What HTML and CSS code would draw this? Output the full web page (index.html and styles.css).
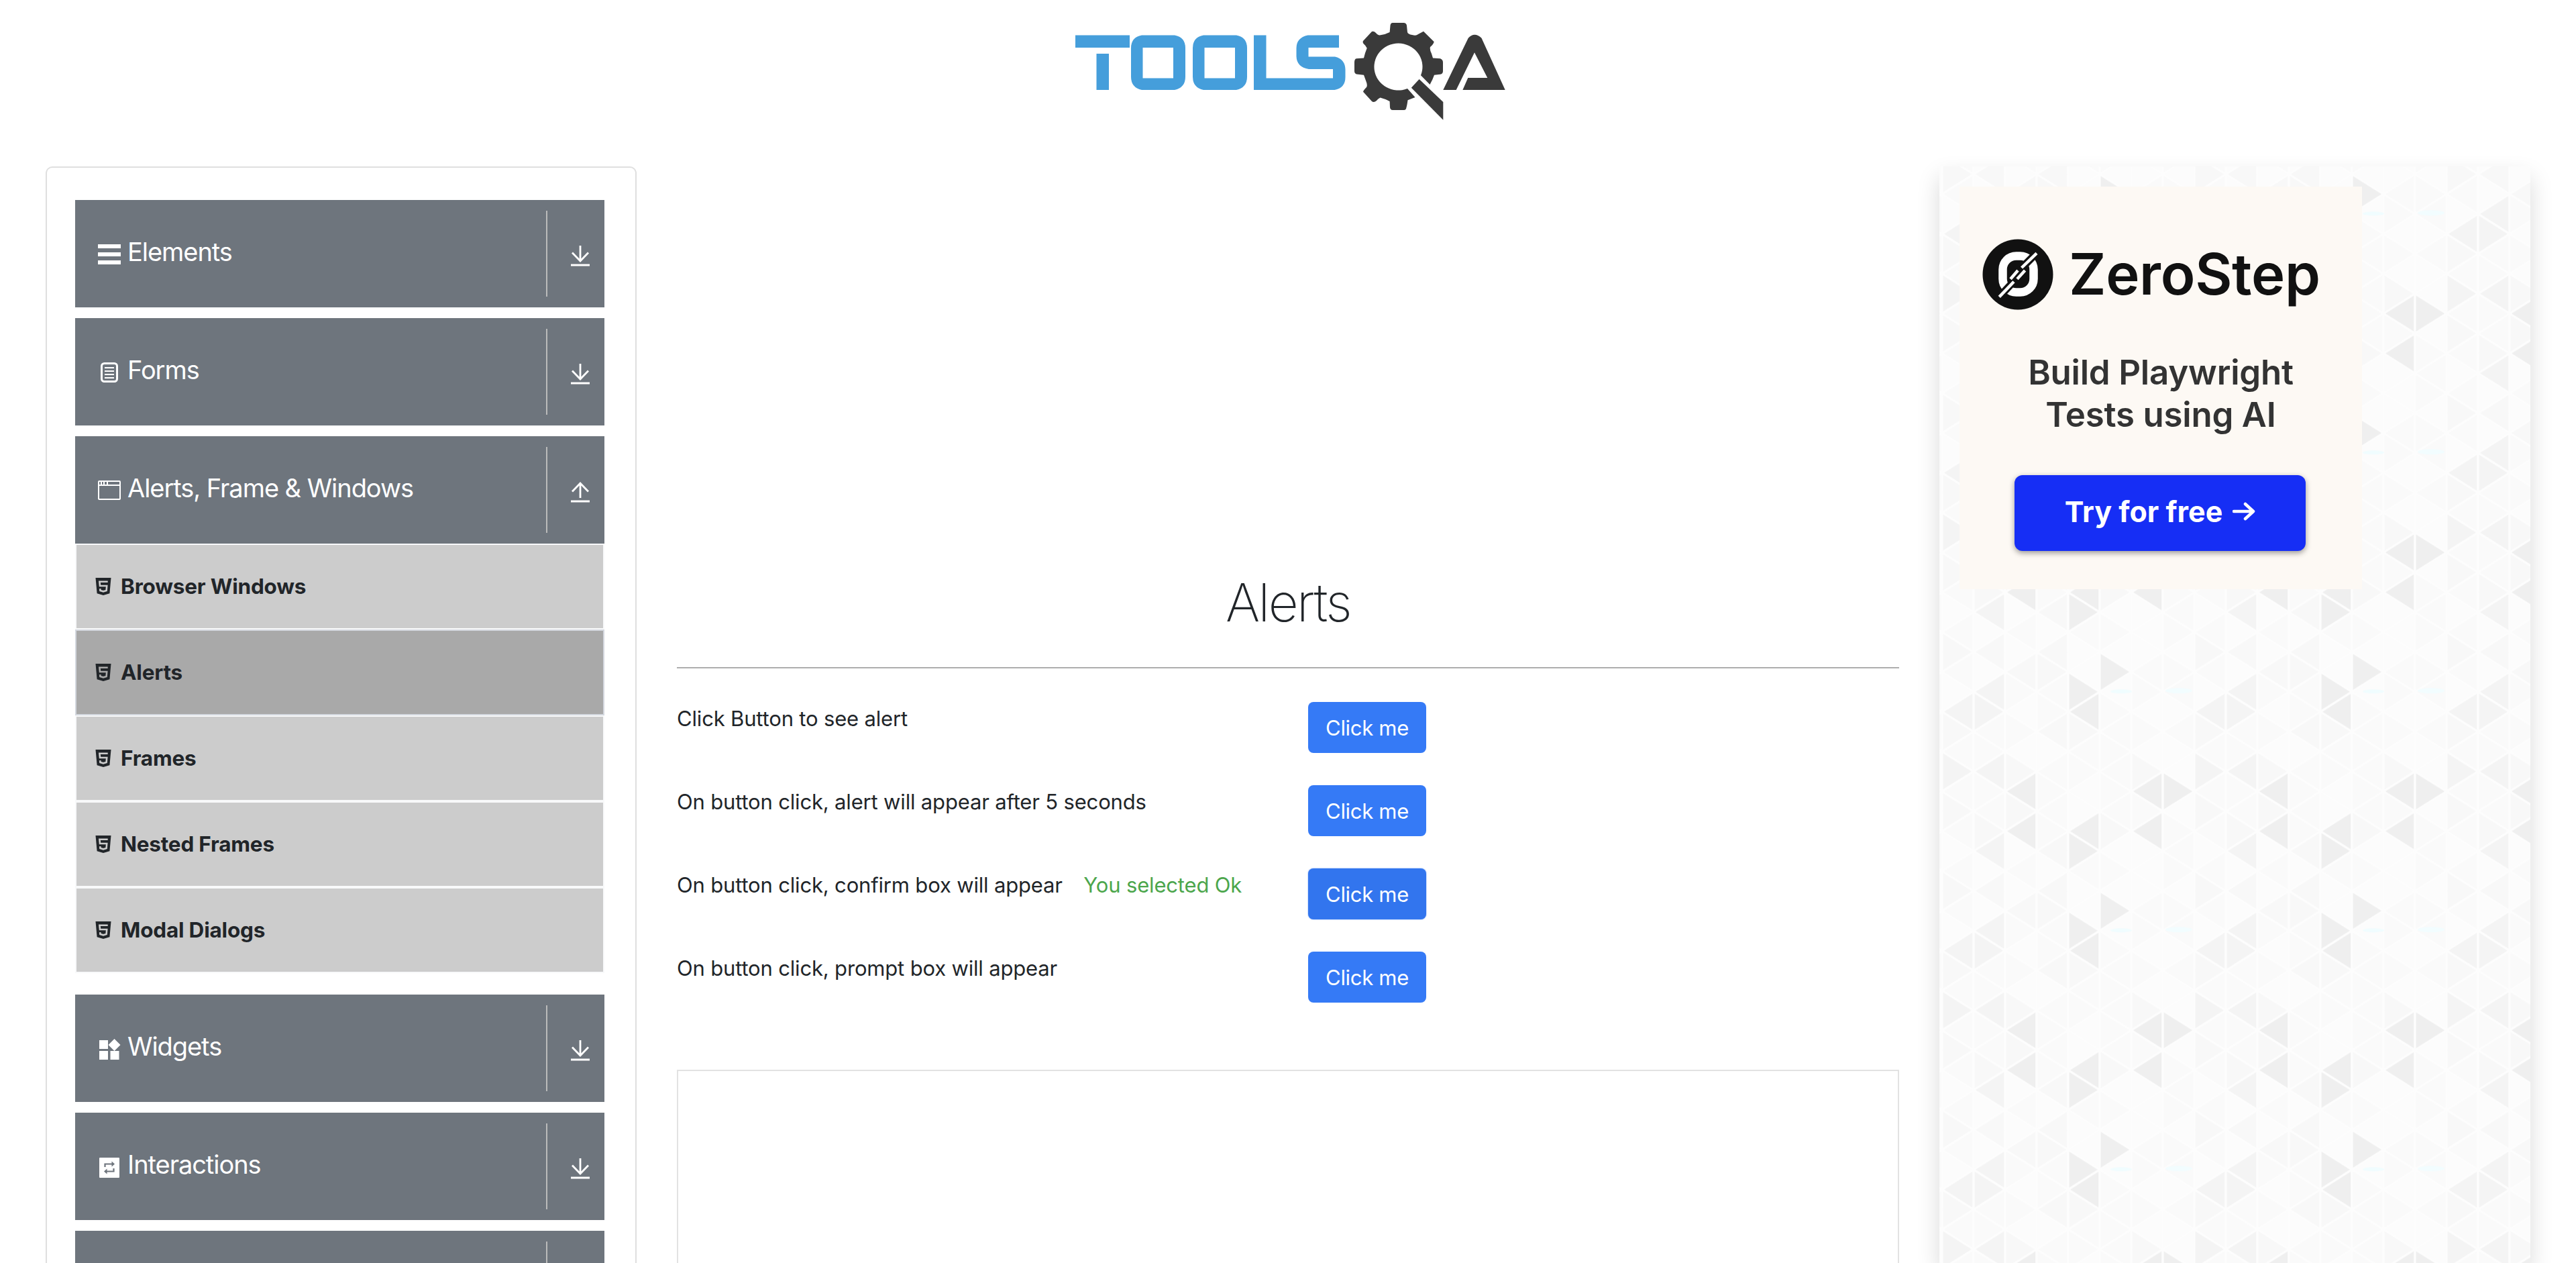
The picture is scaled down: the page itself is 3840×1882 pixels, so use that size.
FILE: index.html
```html
<!DOCTYPE html>
<html lang="en">
<head>
<meta charset="utf-8">
<title>DEMOQA</title>
<link rel="stylesheet" href="styles.css">
</head>
<body>
<svg class="sprite" aria-hidden="true">
  <symbol id="down" viewBox="0 0 30 32"><path d="M15 1v22M3 11.500l12 12.500 12-12.500" fill="none" stroke="#fff" stroke-width="2.800"/><path d="M1 28.500h28v3H1z" fill="#fff"/></symbol>
  <symbol id="up" viewBox="0 0 30 32"><path d="M15 25V3M3 15.500 15 3l12 12.500" fill="none" stroke="#fff" stroke-width="2.800"/><path d="M1 28.500h28v3H1z" fill="#fff"/></symbol>
  <symbol id="html5" viewBox="0 0 24 26"><path d="M.500 0h23l-2.100 23.300L12 26l-9.400-2.700z" fill="currentColor"/><path d="M18.700 5.800H6.400l.600 6.200h10.200l-.600 7-4.600 1.300-4.600-1.300-.200-2.800" fill="none" stroke="var(--cut)" stroke-width="2.600"/></symbol>
</svg>
<header class="top">
  <svg class="logo" viewBox="0 0 690 170" width="690" height="170" role="img" aria-label="ToolsQA">
    <g fill="#459edb" fill-rule="evenodd">
      <path d="M23 32.500h81V51H23zM54.500 60H73v54H54.500z"/>
      <path d="M122 32.500h49q16 3 16 19v43q0 16-16 19.500h-49q-16-3.500-16-19.500v-43q0-16 16-19zM123.500 51v45.500H169V51z"/>
      <path d="M214 32.500h49q16 3 16 19v43q0 16-16 19.500h-49q-16-3.500-16-19.500v-43q0-16 16-19zM215.500 51v45.500H261V51z"/>
      <path d="M289 32.500h18.500v64H407V83h-36q-18-3-18.500-19V52q0-16 17-19.500H416V51h-45.500v13.500H410q15 3.500 15.500 19V95q0 16-16 19H289z"/>
    </g>
    <g fill="#3a3a3a">
      <path d="M496 14H513Q516.500 14.500 517 18L518 28Q519 31 525 32Q531 34 534 31L542 26.700L557.700 42.300Q557 46 552 50Q551 54 554 60L556 66.500L567 67.300Q571 69 571 73V86Q571 90 567 90.700L558 91.700Q556 98 551.500 106L538 92.300A36 35 0 1 0 518 112L529.500 125L518.500 129.300Q517.500 137 516.500 140Q516 144 513 144H496Q492.500 144 492 140L491.600 131Q484 127 477.500 125.500Q474 127 472 130Q468 133.500 465 131L452 116.700Q452 115 457 110Q459 107 456 100L453 91.700L442 90.500Q439 89 439 86V73Q439 68 442 67.300L453 66.500Q455 58 457.700 51.700Q456 48 452.500 45Q451 43 452 41L465 27Q468 26 471 29Q474 33 478 32.300Q486 31 491.600 28L492.500 18Q493 14 496 14Z"/>
      <path d="M535.600 98L571.300 132V158.700L523.800 110.700Z"/>
      <path d="M571.300 114L608.700 36.700Q618 27 628.500 36.700L663.700 114H600.400L608.300 96H637.300L618 58.300L590.700 114Z"/>
    </g>
  </svg>
</header>
<div class="columns">
  <nav class="side">
    <div class="group"><svg class="ico" viewBox="0 0 36 36"><path d="M1 3h34v6H1zM1 15h34v6H1zM1 27h34v6H1z" fill="#fff"/></svg><span class="name">Elements</span><span class="toggle"><svg><use href="#down"/></svg></span></div>
    <div class="group"><svg class="ico" viewBox="0 0 36 36"><rect x="6.500" y="4.500" width="23" height="27" rx="4" fill="none" stroke="#fff" stroke-width="3"/><path d="M11 11h14M11 16h14M11 21h14M11 26h14" stroke="#fff" stroke-width="1.800"/></svg><span class="name">Forms</span><span class="toggle"><svg><use href="#down"/></svg></span></div>
    <div class="group"><svg class="ico" viewBox="0 0 36 36"><rect x="2" y="4" width="32" height="27" rx="1" fill="none" stroke="#fff" stroke-width="2"/><path d="M2 10h32M6 4v6M10 4v6M15 4v6" stroke="#fff" stroke-width="2"/></svg><span class="name">Alerts, Frame &amp; Windows</span><span class="toggle"><svg><use href="#up"/></svg></span></div>
    <ul class="menu">
      <li><svg><use href="#html5"/></svg>Browser Windows</li>
      <li class="active"><svg><use href="#html5"/></svg>Alerts</li>
      <li><svg><use href="#html5"/></svg>Frames</li>
      <li><svg><use href="#html5"/></svg>Nested Frames</li>
      <li><svg><use href="#html5"/></svg>Modal Dialogs</li>
    </ul>
    <div class="group"><svg class="ico" viewBox="0 0 36 36"><path d="M3 5h13v13H3zM3 21h13v13H3zM19.500 21h13v13h-13zM25.500 3l9 9-9 9-9-9z" fill="#fff"/></svg><span class="name">Widgets</span><span class="toggle"><svg><use href="#down"/></svg></span></div>
    <div class="group"><svg class="ico" viewBox="0 0 36 36"><rect x="3" y="4" width="30" height="30" rx="1" fill="#fff"/><path d="M11.500 18v-4.500H22M24.500 20v4.500H14" fill="none" stroke="#6e757d" stroke-width="2.200"/><path d="m21.500 9.500 4.500 4-4.500 4zM14.500 20.500l-4.500 4 4.500 4z" fill="#6e757d"/></svg><span class="name">Interactions</span><span class="toggle"><svg><use href="#down"/></svg></span></div>
    <div class="group cut"><span class="name"></span><span class="toggle"></span></div>
  </nav>
  <main class="content">
    <h1>Alerts</h1>
    <div class="row"><p>Click Button to see alert</p><button>Click me</button></div>
    <div class="row"><p>On button click, alert will appear after 5 seconds</p><button>Click me</button></div>
    <div class="row"><p>On button click, confirm box will appear <span class="result">You selected Ok</span></p><button class="focus">Click me</button></div>
    <div class="row"><p>On button click, prompt box will appear</p><button>Click me</button></div>
    <div class="frame"></div>
  </main>
  <aside class="rail">
    <svg class="weave" width="881" height="1634" aria-hidden="true">
      <defs><pattern id="tile" x="4" y="308.300" width="376" height="356" patternUnits="userSpaceOnUse"></pattern></defs>
      <rect width="881" height="1634" fill="url(#tile)"/>
    </svg>
    <div class="ad">
      <div class="brand">
        <svg width="106" height="108" viewBox="0 0 106 108"><circle cx="53" cy="54" r="52.500" fill="#111"/><rect x="30.500" y="26.500" width="46" height="54" rx="20" fill="none" stroke="#fff" stroke-width="12.500"/><path d="M20 93 50 61M56 47 86 17" stroke="#111" stroke-width="11"/><path d="M25.300 87.400 47 64.700M58.600 44 81 22.400M42 60.700 53 48M52 60.700 63.600 48" stroke="#fff" stroke-width="4.500"/></svg>
        <span>ZeroStep</span>
      </div>
      <p class="pitch"><span>Build Playwright</span><br>Tests using AI</p>
      <div class="cta"><span>Try for free</span><svg width="34" height="30" viewBox="0 0 34 30"><path d="M2 15h28M19 4l12 11-12 11" fill="none" stroke="#fff" stroke-width="4.500" stroke-linecap="round" stroke-linejoin="round"/></svg></div>
    </div>
  </aside>
</div>
<script src="tile.js"></script>
</body>
</html>
```
FILE: styles.css
```css
* { box-sizing: border-box; }
body { margin: 0; width: 3840px; height: 1882px; overflow: hidden; background: #fff; color: #212529; font-family: Inter, "Liberation Sans", sans-serif; font-size: 32px; }
.sprite { display: none; }
p, h1, ul { margin: 0; padding: 0; }

.top { height: 248px; padding: 20px 0 0 1580px; }
.logo { display: block; }

.columns { display: flex; height: 1634px; padding-left: 68px; }

.side { width: 881px; height: 1634px; padding: 48px 46px 0 42px; border: 2px solid #dfdfdf; border-bottom: 0; border-radius: 10px 10px 0 0; }
.group { display: flex; align-items: center; height: 160px; margin-bottom: 16px; padding-left: 33px; background: #6e757d; color: #fff; }
.ico { width: 36px; height: 36px; margin-top: 2px; flex: none; }
.name { flex: 1; padding-left: 9px; font-size: 38px; line-height: 48px; margin-top: -6px; letter-spacing: -1.05px; }
.toggle { width: 87px; height: 128px; border-left: 2px solid #bbb; padding: 51px 0 0 34px; }
.toggle svg { display: block; width: 30px; height: 32px; }
.group.cut { align-items: flex-start; height: 48px; margin-bottom: 0; padding-top: 16px; }
.group.cut .name { margin-top: 0; height: 32px; line-height: 32px; }
.group.cut .toggle { height: 32px; padding-top: 0; }
.menu { list-style: none; margin: -16px 0 32px; }
.menu li { --cut: #ccc; display: flex; align-items: center; height: 128px; padding: 0 0 1px 28px; gap: 14px; border: 2px solid #f8f9fa; background: #ccc; font-size: 31.5px; font-weight: 700; letter-spacing: -0.2px; }
.menu li.active { --cut: #a9a9a9; background: #a9a9a9; border-color: #d4d8df; }
.menu svg { width: 24px; height: 26px; }

.content { width: 1822px; margin-left: 60px; padding-top: 600px; }
h1 { height: 148px; padding-top: 2px; border-bottom: 2px solid #aeaeae; text-align: center; font-size: 78px; font-weight: 200; line-height: 96px; letter-spacing: -2.5px; }
.row { display: flex; height: 124px; }
h1 + .row { margin-top: 50px; }
.row p { width: 941px; padding-top: 1px; line-height: 48px; font-size: 31px; letter-spacing: -0.17px; white-space: nowrap; }
.result { margin-left: 23px; color: #4ca64c; }
button { width: 176px; height: 76px; padding: 0; border: 0; border-radius: 8px; background: #357af6; color: #fff; font: 31px Inter, sans-serif; letter-spacing: -0.3px; }
button.focus { background: #3275ee; box-shadow: 0 0 2px #6d9df6; }
.frame { height: 288px; margin-top: 52px; border: 2px solid #e2e2e2; border-bottom: 0; }

.rail { position: relative; width: 881px; height: 1634px; margin-left: 60px; padding: 30px; background: #fdfdfd; box-shadow: 0 16px 32px rgba(0,0,0,.15); }
.weave { position: absolute; left: 0; top: 0; }
.ad { position: relative; width: 600px; height: 600px; background: #fdf9f4; }
.brand { display: flex; align-items: center; gap: 23px; padding: 77px 0 0 34px; color: #111; font-size: 85px; font-weight: 600; letter-spacing: -0.3px; line-height: 108px; }
.pitch { margin-top: 60px; text-align: center; color: #333; font-size: 51px; font-weight: 600; letter-spacing: -0.2px; line-height: 63px; }
.cta { display: flex; align-items: center; justify-content: center; gap: 15px; width: 434px; height: 113px; margin: 59px 0 0 82px; padding-bottom: 6px; border-radius: 12px; background: #162ef5; box-shadow: 0 3px 9px rgba(0,0,0,.4); color: #fff; font-size: 43px; font-weight: 700; }
```
FILE: tile.js
```js
// Triangle lattice: one string per column, one shade index per half row.
const columns = ["012103213121", "302033113112", "010210102424", "202211201111", "410044211004", "010401111112", "000110102414", "110110100401"];
const shades = ["#fcfcfc", "#fafafa", "#f8f8f8", "#f4f4f4", "#efefef"];
const NS = "http://www.w3.org/2000/svg";
const tile = document.getElementById("tile");
const W = 47, H = 356 / 12;

function add(name, attrs) {
  const el = document.createElementNS(NS, name);
  for (const key in attrs) el.setAttribute(key, attrs[key]);
  tile.appendChild(el);
}

columns.forEach((column, c) => {
  for (let j = -1; j <= 12; j++) {
    const y = j * H;
    const right = (c + j) % 2 === 0;
    const base = right ? c * W : (c + 1) * W;
    const apex = right ? (c + 1) * W : c * W;
    add("path", {
      d: `M${base} ${y - H}L${apex} ${y}L${base} ${y + H}Z`,
      fill: shades[column[(j + 12) % 12]],
      stroke: "#fdfdfd",
      "stroke-width": 3.2,
      "stroke-linejoin": "round"
    });
  }
});
add("ellipse", { cx: 267, cy: 118, rx: 16, ry: 3, fill: "#f0fdff" });
add("ellipse", { cx: 353, cy: 117, rx: 20, ry: 4, fill: "#f2fdff" });
```
